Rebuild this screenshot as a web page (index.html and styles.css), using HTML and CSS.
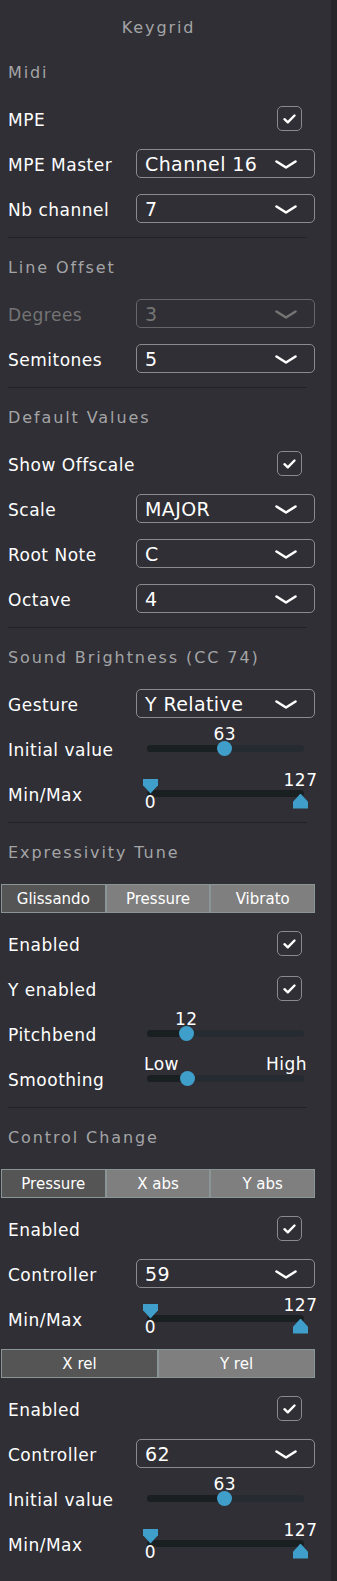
FILE: index.html
```html
<!DOCTYPE html>
<html lang="en">
<head>
    <meta charset="UTF-8">
    <meta name="viewport" content="width=device-width, initial-scale=1.0">
    <title>Keygrid</title>
    <link rel="stylesheet" href="styles.css">
</head>
<body>
<div id="app">
    <div id="panel">
        <div class="title">Keygrid</div>

        <!-- Midi -->
        <div class="section-title">Midi</div>
        <div class="row">
            <span class="label">MPE</span>
            <span class="check"><svg width="13" height="10" viewBox="0 0 13 10"><path d="M1.5 5.2 L4.8 8.3 L11.5 1.5" fill="none" stroke="#fff" stroke-width="2.4" stroke-linecap="round" stroke-linejoin="round"/></svg></span>
        </div>
        <div class="row">
            <span class="label">MPE Master</span>
            <div class="select"><span>Channel 16</span><svg width="22" height="9" viewBox="0 0 22 9"><path d="M1.5 1.5 L11 7.5 L20.5 1.5" fill="none" stroke="#fff" stroke-width="2.6" stroke-linecap="round" stroke-linejoin="round"/></svg></div>
        </div>
        <div class="row">
            <span class="label">Nb channel</span>
            <div class="select"><span>7</span><svg width="22" height="9" viewBox="0 0 22 9"><path d="M1.5 1.5 L11 7.5 L20.5 1.5" fill="none" stroke="#fff" stroke-width="2.6" stroke-linecap="round" stroke-linejoin="round"/></svg></div>
        </div>
        <div class="divider"></div>

        <!-- Line Offset -->
        <div class="section-title">Line Offset</div>
        <div class="row disabled">
            <span class="label">Degrees</span>
            <div class="select"><span>3</span><svg width="22" height="9" viewBox="0 0 22 9"><path d="M1.5 1.5 L11 7.5 L20.5 1.5" fill="none" stroke="#747474" stroke-width="2.6" stroke-linecap="round" stroke-linejoin="round"/></svg></div>
        </div>
        <div class="row">
            <span class="label">Semitones</span>
            <div class="select"><span>5</span><svg width="22" height="9" viewBox="0 0 22 9"><path d="M1.5 1.5 L11 7.5 L20.5 1.5" fill="none" stroke="#fff" stroke-width="2.6" stroke-linecap="round" stroke-linejoin="round"/></svg></div>
        </div>
        <div class="divider"></div>

        <!-- Default Values -->
        <div class="section-title">Default Values</div>
        <div class="row">
            <span class="label">Show Offscale</span>
            <span class="check"><svg width="13" height="10" viewBox="0 0 13 10"><path d="M1.5 5.2 L4.8 8.3 L11.5 1.5" fill="none" stroke="#fff" stroke-width="2.4" stroke-linecap="round" stroke-linejoin="round"/></svg></span>
        </div>
        <div class="row">
            <span class="label">Scale</span>
            <div class="select"><span>MAJOR</span><svg width="22" height="9" viewBox="0 0 22 9"><path d="M1.5 1.5 L11 7.5 L20.5 1.5" fill="none" stroke="#fff" stroke-width="2.6" stroke-linecap="round" stroke-linejoin="round"/></svg></div>
        </div>
        <div class="row">
            <span class="label">Root Note</span>
            <div class="select"><span>C</span><svg width="22" height="9" viewBox="0 0 22 9"><path d="M1.5 1.5 L11 7.5 L20.5 1.5" fill="none" stroke="#fff" stroke-width="2.6" stroke-linecap="round" stroke-linejoin="round"/></svg></div>
        </div>
        <div class="row">
            <span class="label">Octave</span>
            <div class="select"><span>4</span><svg width="22" height="9" viewBox="0 0 22 9"><path d="M1.5 1.5 L11 7.5 L20.5 1.5" fill="none" stroke="#fff" stroke-width="2.6" stroke-linecap="round" stroke-linejoin="round"/></svg></div>
        </div>
        <div class="divider"></div>

        <!-- Sound Brightness -->
        <div class="section-title">Sound Brightness (CC 74)</div>
        <div class="row">
            <span class="label">Gesture</span>
            <div class="select"><span>Y Relative</span><svg width="22" height="9" viewBox="0 0 22 9"><path d="M1.5 1.5 L11 7.5 L20.5 1.5" fill="none" stroke="#fff" stroke-width="2.6" stroke-linecap="round" stroke-linejoin="round"/></svg></div>
        </div>
        <div class="row">
            <span class="label">Initial value</span>
            <div class="slider">
                <div class="track"><div class="fill" style="width: 49.6%"></div></div>
                <div class="thumb" style="left: 49.6%"></div>
                <span class="value" style="left: 49.6%">63</span>
            </div>
        </div>
        <div class="row">
            <span class="label">Min/Max</span>
            <div class="slider">
                <div class="track range"></div>
                <div class="handle min"></div>
                <div class="handle max"></div>
                <span class="value max-value">127</span>
                <span class="value min-value">0</span>
            </div>
        </div>
        <div class="divider"></div>

        <!-- Expressivity Tune -->
        <div class="section-title">Expressivity Tune</div>
        <div class="tabs">
            <div class="tab active">Glissando</div>
            <div class="tab">Pressure</div>
            <div class="tab">Vibrato</div>
        </div>
        <div class="row">
            <span class="label">Enabled</span>
            <span class="check"><svg width="13" height="10" viewBox="0 0 13 10"><path d="M1.5 5.2 L4.8 8.3 L11.5 1.5" fill="none" stroke="#fff" stroke-width="2.4" stroke-linecap="round" stroke-linejoin="round"/></svg></span>
        </div>
        <div class="row">
            <span class="label">Y enabled</span>
            <span class="check"><svg width="13" height="10" viewBox="0 0 13 10"><path d="M1.5 5.2 L4.8 8.3 L11.5 1.5" fill="none" stroke="#fff" stroke-width="2.4" stroke-linecap="round" stroke-linejoin="round"/></svg></span>
        </div>
        <div class="row">
            <span class="label">Pitchbend</span>
            <div class="slider">
                <div class="track"><div class="fill" style="width: 25%"></div></div>
                <div class="thumb" style="left: 25%"></div>
                <span class="value" style="left: 25%">12</span>
            </div>
        </div>
        <div class="row">
            <span class="label">Smoothing</span>
            <div class="slider">
                <div class="track"><div class="fill" style="width: 26%"></div></div>
                <div class="thumb" style="left: 26%"></div>
                <span class="value low">Low</span>
                <span class="value high">High</span>
            </div>
        </div>
        <div class="divider"></div>

        <!-- Control Change -->
        <div class="section-title">Control Change</div>
        <div class="tabs">
            <div class="tab active">Pressure</div>
            <div class="tab">X abs</div>
            <div class="tab">Y abs</div>
        </div>
        <div class="row">
            <span class="label">Enabled</span>
            <span class="check"><svg width="13" height="10" viewBox="0 0 13 10"><path d="M1.5 5.2 L4.8 8.3 L11.5 1.5" fill="none" stroke="#fff" stroke-width="2.4" stroke-linecap="round" stroke-linejoin="round"/></svg></span>
        </div>
        <div class="row">
            <span class="label">Controller</span>
            <div class="select"><span>59</span><svg width="22" height="9" viewBox="0 0 22 9"><path d="M1.5 1.5 L11 7.5 L20.5 1.5" fill="none" stroke="#fff" stroke-width="2.6" stroke-linecap="round" stroke-linejoin="round"/></svg></div>
        </div>
        <div class="row">
            <span class="label">Min/Max</span>
            <div class="slider">
                <div class="track range"></div>
                <div class="handle min"></div>
                <div class="handle max"></div>
                <span class="value max-value">127</span>
                <span class="value min-value">0</span>
            </div>
        </div>
        <div class="tabs">
            <div class="tab active">X rel</div>
            <div class="tab">Y rel</div>
        </div>
        <div class="row">
            <span class="label">Enabled</span>
            <span class="check"><svg width="13" height="10" viewBox="0 0 13 10"><path d="M1.5 5.2 L4.8 8.3 L11.5 1.5" fill="none" stroke="#fff" stroke-width="2.4" stroke-linecap="round" stroke-linejoin="round"/></svg></span>
        </div>
        <div class="row">
            <span class="label">Controller</span>
            <div class="select"><span>62</span><svg width="22" height="9" viewBox="0 0 22 9"><path d="M1.5 1.5 L11 7.5 L20.5 1.5" fill="none" stroke="#fff" stroke-width="2.6" stroke-linecap="round" stroke-linejoin="round"/></svg></div>
        </div>
        <div class="row">
            <span class="label">Initial value</span>
            <div class="slider">
                <div class="track"><div class="fill" style="width: 49.6%"></div></div>
                <div class="thumb" style="left: 49.6%"></div>
                <span class="value" style="left: 49.6%">63</span>
            </div>
        </div>
        <div class="row">
            <span class="label">Min/Max</span>
            <div class="slider">
                <div class="track range"></div>
                <div class="handle min"></div>
                <div class="handle max"></div>
                <span class="value max-value">127</span>
                <span class="value min-value">0</span>
            </div>
        </div>
    </div>
    <div id="gutter"></div>
</div>
</body>
</html>
```

FILE: styles.css
```css
body {
    margin: 0;
    background-color: #2f2f35;
    font-family: "DejaVu Sans", Verdana, sans-serif;
    color: #ffffff;
}
#app {
    display: flex;
    min-height: 1581px;
}
#panel {
    width: 315px;
    flex: none;
}
#gutter {
    width: 6px;
    margin-left: auto;
    background: #26262a;
}

/* headings */
.title, .section-title {
    font-size: 16px;
    line-height: 20px;
    letter-spacing: 1.9px;
    color: #a4a4a6;
}
.title {
    height: 43px;
    box-sizing: border-box;
    padding: 18px 0 0 2px;
    text-align: center;
}
.section-title {
    padding: 20px 8px 13px;
}
.divider {
    height: 1px;
    margin: 6px 8px 0;
    background: #222226;
}

/* rows */
.row {
    display: flex;
    align-items: center;
    height: 45px;
    padding-left: 8px;
    font-size: 17px;
    letter-spacing: 0.5px;
}
.label {
    width: 128px;
    flex: none;
    padding-top: 2px;
    white-space: nowrap;
}
.row.disabled .label, .row.disabled .select { color: #747474; }
.row.disabled .select { border-color: #666669; }

/* dropdown */
.select {
    display: flex;
    align-items: center;
    justify-content: space-between;
    width: 179px;
    height: 29px;
    box-sizing: border-box;
    border: 1px solid #8b8b8d;
    border-radius: 5px;
    padding: 1px 17px 0 8px;
    font-size: 19px;
    letter-spacing: 0.4px;
}
.select svg { display: block; }

/* checkbox */
.check {
    margin-left: auto;
    margin-right: 13px;
    width: 25px;
    height: 25px;
    box-sizing: border-box;
    border: 1.5px solid #8a8a8c;
    border-radius: 5px;
    display: flex;
    align-items: center;
    justify-content: center;
}
.check svg { display: block; }

/* tabs */
.tabs {
    display: flex;
    width: 314px;
    height: 29px;
    margin: 8px 0 8px 1px;
}
.tab {
    flex: 1;
    border: 1px solid #8a9696;
    background: #7f7f7f;
    display: flex;
    align-items: center;
    justify-content: center;
    font-size: 15px;
}
.tab.active { background: #555555; }

/* sliders */
.slider {
    position: relative;
    width: 157px;
    height: 45px;
    margin-left: 11px;
}
.track {
    position: absolute;
    left: 0;
    right: 0;
    top: 19px;
    height: 7px;
    border-radius: 4px;
    background: #252b30;
    overflow: hidden;
}
.track.range { background: #1a1f22; }
.fill {
    height: 100%;
    background: #1a1f22;
}
.thumb {
    position: absolute;
    top: 15px;
    width: 15px;
    height: 15px;
    margin-left: -7.5px;
    border-radius: 50%;
    background: #3f9fca;
}
.value {
    position: absolute;
    top: 0;
    line-height: 17px;
    transform: translateX(-50%);
}
.value.low { left: -3px; transform: none; }
.value.high { left: auto; right: -3px; transform: none; }
.value.max-value { left: 153.5px; top: 1px; }
.value.min-value { left: 3.5px; top: 23px; }
.handle {
    position: absolute;
    width: 15px;
    height: 15px;
    background: #3f9fca;
}
.handle.min {
    left: -4px;
    top: 7.5px;
    clip-path: polygon(0 0, 100% 0, 100% 45%, 50% 100%, 0 45%);
}
.handle.max {
    left: 146px;
    top: 22.5px;
    clip-path: polygon(50% 0, 100% 55%, 100% 100%, 0 100%, 0 55%);
}
```
